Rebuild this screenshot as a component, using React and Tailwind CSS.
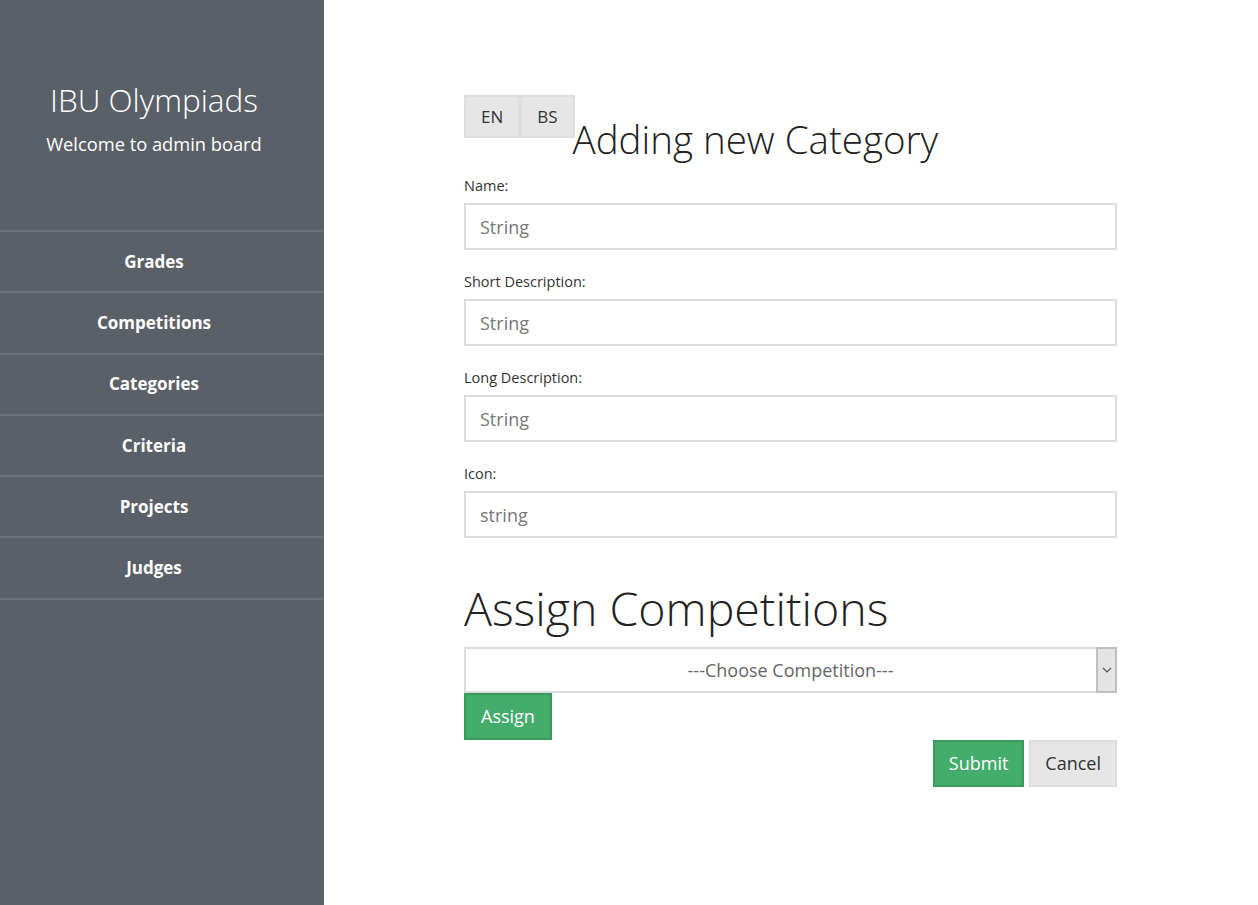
import { useState } from "react";

const navItems = ["Grades", "Competitions", "Categories", "Criteria", "Projects", "Judges"];

function Field({ label, placeholder }) {
  return (
    <div className="mb-[23px]">
      <label className="block text-[14.5px] text-[#333] leading-[18px] mb-[8px]">{label}</label>
      <input
        className="block w-full h-[47px] border-2 border-[#dcdcdc] px-[14px] text-[18px] text-[#666] placeholder:text-[#777] outline-none"
        placeholder={placeholder}
      />
    </div>
  );
}

export default function App() {
  const [lang, setLang] = useState("EN");

  return (
    <div className="flex min-h-[905px] font-['Open_Sans',sans-serif] bg-white">
      <aside className="w-[324px] shrink-0 bg-[#5a6068] text-white">
        <div className="pt-[80px] pb-[74px] pr-[16px] text-center">
          <h1 className="text-[31.5px] font-light leading-[40px]">IBU Olympiads</h1>
          <p className="mt-[12px] text-[18.3px] leading-[24px]">Welcome to admin board</p>
        </div>
        <nav className="border-t-2 border-[#6b7079]">
          {navItems.map((item) => (
            <a
              key={item}
              href="#"
              className="flex items-center justify-center pr-[16px] h-[61.3px] border-b-2 border-[#6b7079] text-[17px] font-bold"
            >
              {item}
            </a>
          ))}
        </nav>
      </aside>

      <main className="flex-1 pl-[140px] pt-[95px]">
        <div className="w-[653px]">
          <div className="flex items-start">
            <div className="flex">
              {["EN", "BS"].map((l) => (
                <button
                  key={l}
                  onClick={() => setLang(l)}
                  className="h-[43px] px-[15px] bg-[#e6e6e6] border-2 border-[#dedede] text-[17px] text-[#333]"
                >
                  {l}
                </button>
              ))}
            </div>
            <h2 className="mt-[19px] -ml-[2px] text-[38.5px] font-light leading-[50px] text-[#222]">
              Adding new Category
            </h2>
          </div>

          <form className="mt-[13px]">
            <Field label="Name:" placeholder="String" />
            <Field label="Short Description:" placeholder="String" />
            <Field label="Long Description:" placeholder="String" />
            <Field label="Icon:" placeholder="string" />

            <h2 className="mt-[40px] text-[46.5px] font-light leading-[60px] text-[#222]">Assign Competitions</h2>
            <div className="relative mt-[9px]">
              <select className="block w-full h-[46px] appearance-none border-2 border-[#dcdcdc] text-center text-[18px] text-[#666] outline-none bg-white">
                <option>---Choose Competition---</option>
              </select>
              <div className="absolute right-0 top-0 h-[46px] w-[21px] bg-[#e3e3e3] border-2 border-[#bfbfbf] flex items-center justify-center pointer-events-none">
                <svg width="10" height="6" viewBox="0 0 10 6" fill="none" stroke="#555" strokeWidth="1.2">
                  <path d="M1 1l4 4 4-4" />
                </svg>
              </div>
            </div>
            <button type="button" className="block h-[47px] px-[15px] bg-[#44ad6b] border-2 border-[#3a9a5e] text-white text-[18px]">
              Assign
            </button>
            <div className="flex justify-end gap-[5px]">
              <button type="submit" className="h-[47px] px-[14px] bg-[#44ad6b] border-2 border-[#3a9a5e] text-white text-[18px]">
                Submit
              </button>
              <button type="button" className="h-[47px] px-[14px] bg-[#e6e6e6] border-2 border-[#dedede] text-[#333] text-[18px]">
                Cancel
              </button>
            </div>
          </form>
        </div>
      </main>
    </div>
  );
}
